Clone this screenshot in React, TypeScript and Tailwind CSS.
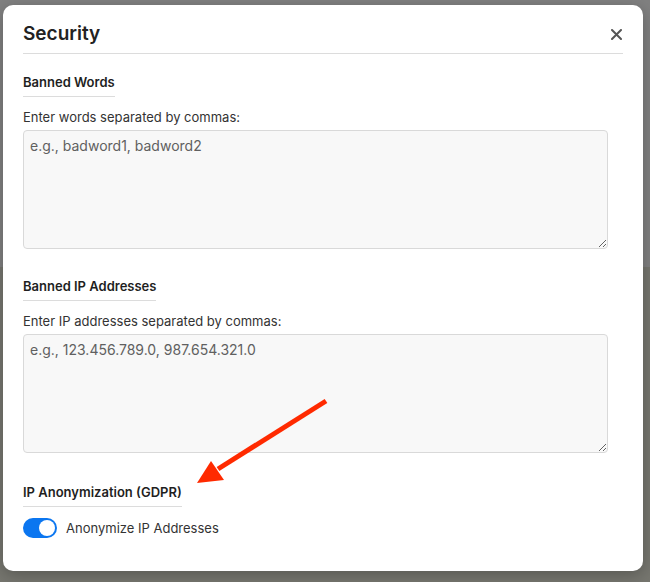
import React from 'react';

const SectionHeading = ({ children }: { children: React.ReactNode }) => (
  <div className="w-fit border-b border-[#dcdcdc] pb-[5px] text-[13px] leading-[18px] font-semibold text-[#1f1f1f]">
    {children}
  </div>
);

const TextAreaField = ({ label, placeholder }: { label: string; placeholder: string }) => (
  <div className="flex flex-col">
    <label className="mt-[11px] text-[13px] leading-[18px] text-[#333]">{label}</label>
    <textarea
      placeholder={placeholder}
      className="mt-[4px] block h-[119px] w-[585px] rounded-[4px] border border-[#d9d9d9] bg-[#f8f8f8] px-[6px] py-[5px] text-[14px] leading-[20px] text-[#333] placeholder:text-[#606060] outline-none"
    />
  </div>
);

const App = () => {
  return (
    <div
      className="relative h-[582px] w-[650px] overflow-hidden bg-[linear-gradient(#808080_0_267px,#76766f_267px)] pl-[3px] pt-[5px]"
      style={{ fontFamily: 'Inter, "Noto Sans", sans-serif' }}
    >
      <div className="h-[566px] w-[640px] rounded-[10px] bg-white px-[20px] shadow-[0_4px_16px_rgba(0,0,0,0.25)]">
        <div className="flex items-center justify-between border-b border-[#dcdcdc] pb-[5px] pt-[15px]">
          <h2 className="text-[19px] leading-[28px] font-semibold text-[#222]">Security</h2>
          <button className="mr-[1px] text-[#555]" aria-label="Close">
            <svg width="11" height="11" viewBox="0 0 11 11">
              <path d="M1 1L10 10M10 1L1 10" stroke="currentColor" strokeWidth="2" strokeLinecap="round" />
            </svg>
          </button>
        </div>

        <div className="mt-[19px]">
          <SectionHeading>Banned Words</SectionHeading>
          <TextAreaField label="Enter words separated by commas:" placeholder="e.g., badword1, badword2" />
        </div>

        <div className="mt-[28px]">
          <SectionHeading>Banned IP Addresses</SectionHeading>
          <TextAreaField
            label="Enter IP addresses separated by commas:"
            placeholder="e.g., 123.456.789.0, 987.654.321.0"
          />
        </div>

        <div className="mt-[30px]">
          <SectionHeading>IP Anonymization (GDPR)</SectionHeading>
          <div className="mt-[11px] flex items-center gap-[9px]">
            <div className="flex h-[20px] w-[34px] items-center justify-end rounded-full bg-[#0b76f0] px-[2px]">
              <div className="h-[16px] w-[16px] rounded-full bg-white" />
            </div>
            <span className="text-[13px] leading-[18px] text-[#333]">Anonymize IP Addresses</span>
          </div>
        </div>
      </div>

      <svg className="pointer-events-none absolute left-0 top-0" width="650" height="582">
        <line x1="326" y1="401" x2="218" y2="469" stroke="#ff2a00" strokeWidth="5" />
        <polygon points="197,483 211,461 224,480" fill="#ff2a00" />
      </svg>
    </div>
  );
};

export default App;
